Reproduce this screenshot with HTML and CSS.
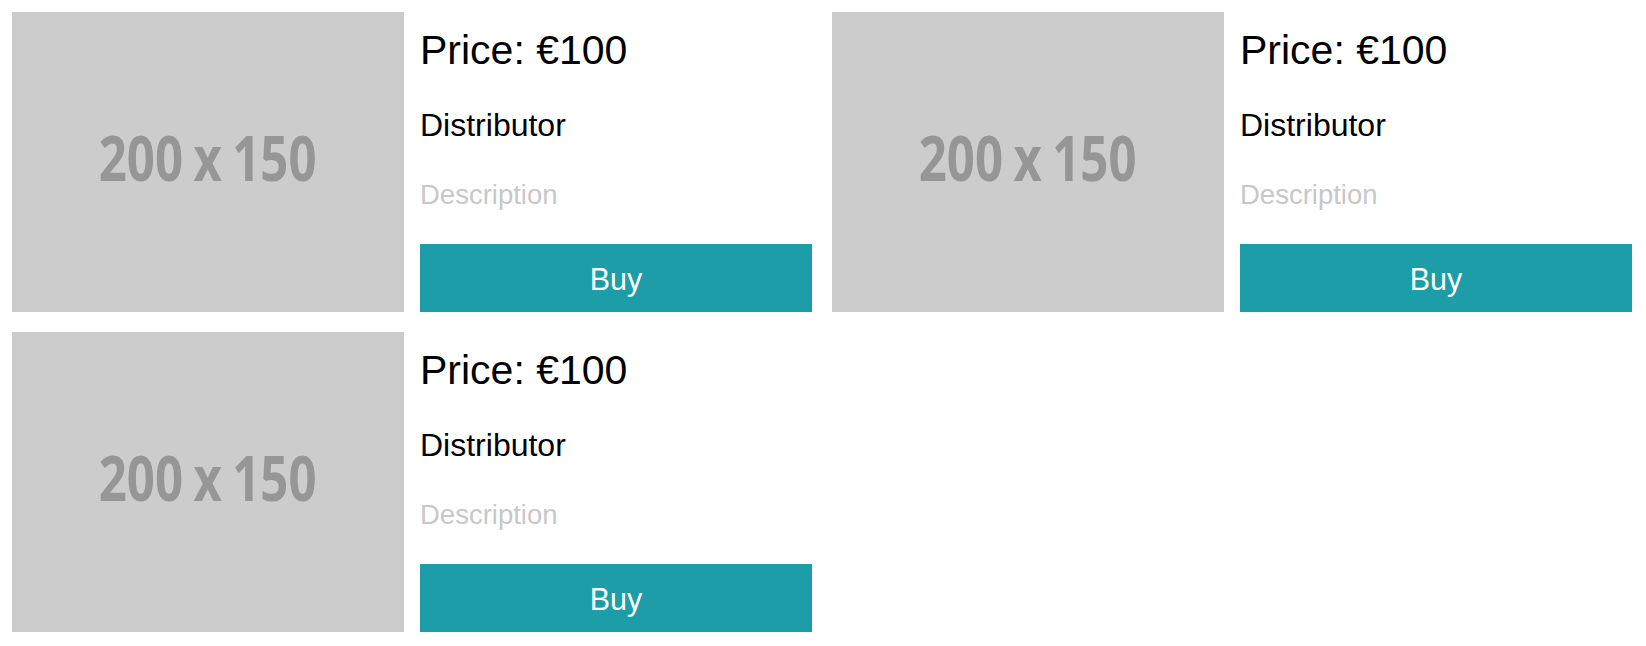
FILE: index.html
```html
<!DOCTYPE html>
<html>
<head>
<meta charset="utf-8">
<link rel="stylesheet" href="styles.css">
</head>
<body>
<div class="grid">
  <div class="card">
    <div class="thumb"><span class="thumb-label">200 x 150</span></div>
    <div class="info">
      <div class="price">Price: €100</div>
      <div class="distributor">Distributor</div>
      <div class="description">Description</div>
      <button class="buy">Buy</button>
    </div>
  </div>
  <div class="card">
    <div class="thumb"><span class="thumb-label">200 x 150</span></div>
    <div class="info">
      <div class="price">Price: €100</div>
      <div class="distributor">Distributor</div>
      <div class="description">Description</div>
      <button class="buy">Buy</button>
    </div>
  </div>
  <div class="card">
    <div class="thumb"><span class="thumb-label">200 x 150</span></div>
    <div class="info">
      <div class="price">Price: €100</div>
      <div class="distributor">Distributor</div>
      <div class="description">Description</div>
      <button class="buy">Buy</button>
    </div>
  </div>
</div>
</body>
</html>
```
FILE: styles.css
```css
html, body {
  margin: 0;
  padding: 0;
  background: #ffffff;
}
body {
  padding: 12px 14px 14px 12px;
  font-family: "Liberation Sans", Arial, sans-serif;
  color: #000;
}
.grid {
  display: grid;
  grid-template-columns: 800px 800px;
  column-gap: 20px;
  row-gap: 20px;
}
.card {
  display: grid;
  grid-template-columns: 392px 392px;
  column-gap: 16px;
  height: 300px;
}
.thumb {
  background: #cccccc;
  display: flex;
  align-items: center;
  justify-content: center;
  padding-bottom: 12px;
  box-sizing: border-box;
}
.thumb-label {
  font-family: "Open Sans", "DejaVu Sans", sans-serif;
  font-weight: 700;
  font-size: 63px;
  line-height: 1;
  color: #969696;
  transform: scaleX(0.78);
  white-space: nowrap;
  word-spacing: -3px;
}
.info {
  display: flex;
  flex-direction: column;
  line-height: 1;
}
.price {
  font-size: 41px;
  margin-top: 18px;
}
.distributor {
  font-size: 32px;
  margin-top: 38px;
}
.description {
  font-size: 27.5px;
  margin-top: 40px;
  color: #c8c8c8;
}
.buy {
  margin-top: auto;
  height: 68px;
  width: 100%;
  border: none;
  padding: 2px 0 0 0;
  background: #1c9da8;
  color: #ffffff;
  font-family: "Liberation Sans", Arial, sans-serif;
  font-size: 30.5px;
  line-height: 1;
  cursor: pointer;
}
```
